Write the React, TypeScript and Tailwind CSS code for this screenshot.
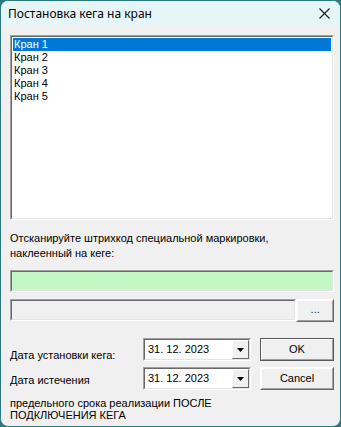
import React from "react";

const sunken =
  "border-t-[#a0a0a0] border-l-[#a0a0a0] border-b-white border-r-white border";
const sunkenInner =
  "border-t-[#696969] border-l-[#696969] border-b-[#e3e3e3] border-r-[#e3e3e3] border";

function Sunken({ className, children }: { className?: string; children?: React.ReactNode }) {
  return (
    <div className={`${sunken} ${className ?? ""}`}>
      <div className={`${sunkenInner} w-full h-full`}>{children}</div>
    </div>
  );
}

function Raised({ className, children, dark }: { className?: string; children?: React.ReactNode; dark?: boolean }) {
  return (
    <div
      className={`border ${dark ? "border-[#5a5a5a]" : "border-t-white border-l-white border-b-[#696969] border-r-[#696969]"} ${className ?? ""}`}
    >
      <div className="w-full h-full border border-t-[#fdfdfd] border-l-[#fdfdfd] border-b-[#a0a0a0] border-r-[#a0a0a0] bg-[#f0f0f0] flex items-center justify-center">
        {children}
      </div>
    </div>
  );
}

function DateCombo() {
  return (
    <Sunken className="w-[108px] h-[23px] bg-white">
      <div className="flex h-full bg-white">
        <div className="flex-1 pl-[3px] flex items-center">31. 12. 2023</div>
        <div className="w-[17px] h-full border border-t-white border-l-white border-b-[#696969] border-r-[#696969] bg-[#f0f0f0] flex items-center justify-center">
          <svg width="7" height="4" viewBox="0 0 7 4">
            <path d="M0 0h7L3.5 4z" fill="#000" />
          </svg>
        </div>
      </div>
    </Sunken>
  );
}

export default function App() {
  const items = ["Кран 1", "Кран 2", "Кран 3", "Кран 4", "Кран 5"];
  return (
    <div
      className="w-[341px] h-[427px] bg-[#2b7a7d] text-[11px] text-black"
      style={{ fontFamily: '"Liberation Sans", Arial, sans-serif' }}
    >
      <div className="w-full h-full border border-[#2b7a7d] rounded-[8px] overflow-hidden bg-[#f0f0f0] flex flex-col">
        <div className="h-[25px] bg-[#e6f6f8] flex items-center justify-between pl-[7px] pr-[10px] shrink-0">
          <span className="text-[12px]" style={{ fontFamily: '"Noto Sans", sans-serif' }}>
            Постановка кега на кран
          </span>
          <svg width="11" height="11" viewBox="0 0 11 11">
            <path d="M0.5 0.5L10.5 10.5M10.5 0.5L0.5 10.5" stroke="#1a1a1a" strokeWidth="1.1" />
          </svg>
        </div>
        <div className="flex flex-col pl-[9px] pr-[6px] pt-[9px]">
          <Sunken className="w-[324px] h-[185px] bg-white">
            <div className="bg-white h-full pt-[1px] pl-[1px] pr-[1px]">
              {items.map((t, i) => (
                <div
                  key={t}
                  className={`h-[13px] leading-[13px] pl-[1px] ${i === 0 ? "bg-[#0078d7] text-white" : ""}`}
                >
                  {t}
                </div>
              ))}
            </div>
          </Sunken>
          <div className="mt-[11px] leading-[15px]">
            Отсканируйте штрихкод специальной маркировки,
            <br />
            наклеенный на кеге:
          </div>
          <Sunken className="mt-[9px] w-[324px] h-[22px] bg-[#c3f7c3]">
            <div className="w-full h-full bg-[#c3f7c3]" />
          </Sunken>
          <div className="mt-[7px] flex">
            <Sunken className="w-[289px] h-[22px]">
              <div className="w-full h-full bg-[#f0f0f0]" />
            </Sunken>
            <Raised className="w-[38px] h-[23px]">
              <span className="text-[#1a1a6a] leading-none pb-[2px]">...</span>
            </Raised>
          </div>
          <div className="mt-[16px] flex">
            <div className="w-[136px] flex flex-col">
              <div className="h-[23px] mt-[6px] flex items-center">Дата установки кега:</div>
              <div className="h-[23px] mt-[2px] flex items-center">Дата истечения</div>
            </div>
            <div className="flex flex-col gap-[6px]">
              <DateCombo />
              <DateCombo />
            </div>
            <div className="flex flex-col gap-[6px] ml-[9px]">
              <Raised dark className="w-[74px] h-[23px]">
                OK
              </Raised>
              <Raised className="w-[74px] h-[23px]">Cancel</Raised>
            </div>
          </div>
          <div className="mt-[5px] leading-[12px]">
            предельного срока реализации ПОСЛЕ
            <br />
            ПОДКЛЮЧЕНИЯ КЕГА
          </div>
        </div>
      </div>
    </div>
  );
}
